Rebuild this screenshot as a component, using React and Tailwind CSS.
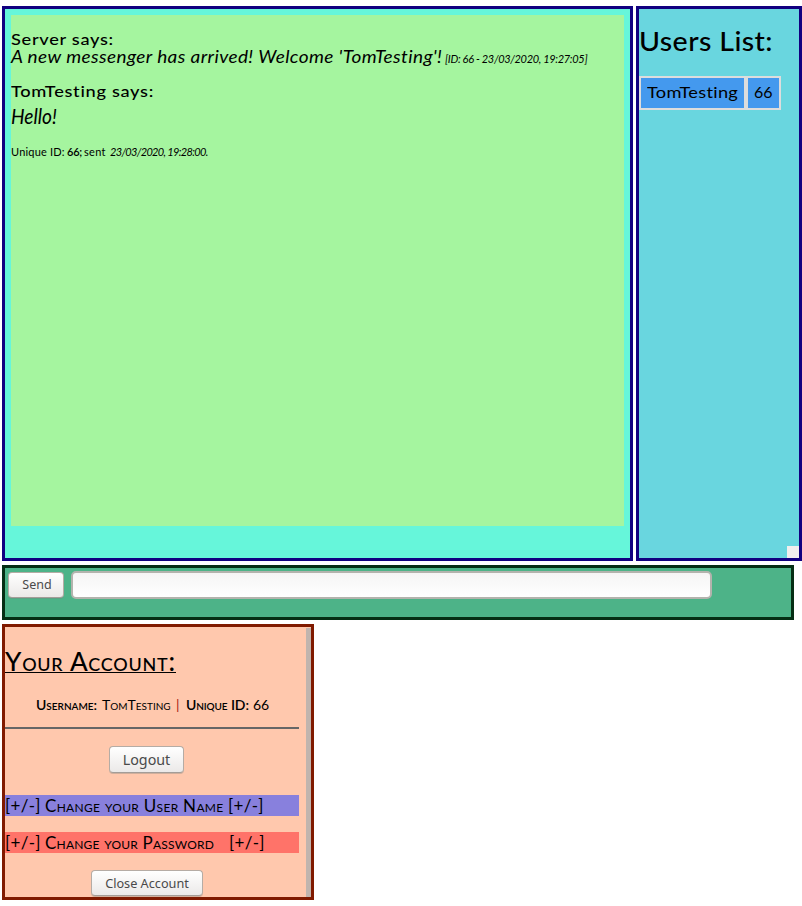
const button =
  "flex items-center justify-center rounded-[4px] border border-[#b5aca5] border-b-[#a39d98] bg-linear-to-b from-white to-[#ebe9e8] font-['Noto_Sans',sans-serif] text-[#4a4a4a] shadow-[0_1px_0_rgba(120,130,125,0.35)]";

function Chat() {
  return (
    <section className="h-[555px] w-[631px] border-3 border-[#110080] bg-[#66f6da] px-[6px] pt-[6px]">
      <div className="h-[511px] whitespace-nowrap bg-[#a5f59f] pt-[15px]">
        <p className="h-[18px] w-[90px] origin-left scale-x-[1.14] text-[16px] leading-[18px] font-medium tracking-[0.6px]">Server says:</p>
        <p className="flex h-[18px] items-baseline italic leading-[18px]">
          <span className="w-[434px] origin-left scale-x-[1.15] text-[16.5px] tracking-[0.35px]">A new messenger has arrived! Welcome 'TomTesting'!</span>
          <span className="text-[11px] tracking-[-0.32px]">[ID: 66 - 23/03/2020, 19:27:05]</span>
        </p>
        <p className="mt-[16px] h-[18px] w-[130px] origin-left scale-x-[1.14] text-[16px] leading-[18px] font-medium tracking-[0.6px]">TomTesting says:</p>
        <p className="h-[32px] w-[46px] origin-left scale-x-[0.87] text-[22px] leading-[32px] italic">Hello!</p>
        <p className="mt-[11px] flex h-[18px] items-baseline text-[11px] leading-[18px]">
          <span className="w-[56px] tracking-[0.2px]">Unique ID:</span>
          <span className="w-[17px] font-semibold tracking-[-0.2px]">66;</span>
          <span className="w-[26px] tracking-[0.3px]">sent</span>
          <span className="italic tracking-[-0.67px]">23/03/2020, 19:28:00.</span>
        </p>
      </div>
    </section>
  );
}

function Users() {
  return (
    <section className="flex h-[555px] w-[166px] flex-col border-3 border-[#110080] bg-[#69d6df]">
      <h1 className="mt-[15px] h-[34px] w-[122px] origin-left scale-x-110 whitespace-nowrap text-[26px] leading-[34px] font-medium tracking-[0.35px]">Users List:</h1>
      <div className="mt-[18px] flex h-[34px] w-[142px] gap-[4px] bg-[#dddddd] p-[2px] text-[16px] leading-[28px]">
        <div className="w-[103px] bg-[#4499ee] pl-[6px]">
          <span className="block w-[80px] origin-left scale-x-[1.14] tracking-[0.25px]">TomTesting</span>
        </div>
        <div className="w-[31px] bg-[#4499ee] pl-[6px]">66</div>
      </div>
      <div className="mt-auto ml-auto size-[12px] bg-[#f1efee]" />
    </section>
  );
}

function Composer() {
  return (
    <section className="mt-[4px] flex h-[55px] w-[792px] border-3 border-[#052e14] bg-[#4db388] pl-[3px]">
      <button className={`${button} mt-[4px] h-[26px] w-[56px] pt-px pl-[2px] text-[12.5px]`}>Send</button>
      <input
        type="text"
        aria-label="Message"
        className="mt-[3px] ml-[7px] h-[28px] w-[641px] rounded-[5px] border-2 border-[#b3b3ad] bg-linear-to-b from-[#f5f5f5] to-white px-2"
      />
    </section>
  );
}

function Account() {
  return (
    <section className="mt-[4px] flex h-[276px] w-[312px] border-3 border-[#801a00] bg-[#ffc8ad] font-['Lato',sans-serif]">
      <div className="w-[294px] whitespace-nowrap">
        <h2 className="mt-[18px] h-[28px] w-[171px] border-b border-black text-[26px] leading-[32px] font-medium tracking-[0.75px] [font-variant:small-caps]">Your Account:</h2>
        <p className="mt-[23px] flex h-[18px] pl-[31px] text-[14px] leading-[18px] [font-variant:small-caps]">
          <span className="w-[66px] font-semibold">Username:</span>
          <span className="w-[74px]">TomTesting</span>
          <span className="w-[10px] text-[#a51c14]">|</span>
          <span className="w-[67px] font-semibold tracking-[-0.1px]">Unique ID:</span>
          <span>66</span>
        </p>
        <div className="mt-[13px] h-[2px] bg-[#666666]" />
        <button className={`${button} mt-[17px] ml-[104px] h-[27px] w-[75px] text-[14.3px]`}>Logout</button>
        <p className="mt-[22px] flex h-[21px] bg-[#8880dd] text-[17px] leading-[21px] [font-variant:small-caps]">
          <span className="w-[40px] tracking-[0.3px]">[+/-]</span>
          <span className="w-[183px] tracking-[0.3px]">Change your User Name</span>
          <span className="tracking-[0.3px]">[+/-]</span>
        </p>
        <p className="mt-[16px] flex h-[21px] bg-[#ff7369] text-[17px] leading-[21px] [font-variant:small-caps]">
          <span className="w-[40px] tracking-[0.3px]">[+/-]</span>
          <span className="w-[184px] tracking-[0.2px]">Change your Password</span>
          <span className="tracking-[0.3px]">[+/-]</span>
        </p>
        <button className={`${button} mt-[17px] ml-[86px] h-[26px] w-[112px] pt-px text-[12.7px]`}>Close Account</button>
      </div>
      <div className="mt-px ml-auto w-[5px] bg-[#c0b4ae]" />
    </section>
  );
}

export default function App() {
  return (
    <main className="h-[906px] w-[802px] overflow-hidden bg-white pt-[6px] pl-[2px] font-['Lato',sans-serif] text-black">
      <div className="flex gap-[3px]">
        <Chat />
        <Users />
      </div>
      <Composer />
      <Account />
    </main>
  );
}
